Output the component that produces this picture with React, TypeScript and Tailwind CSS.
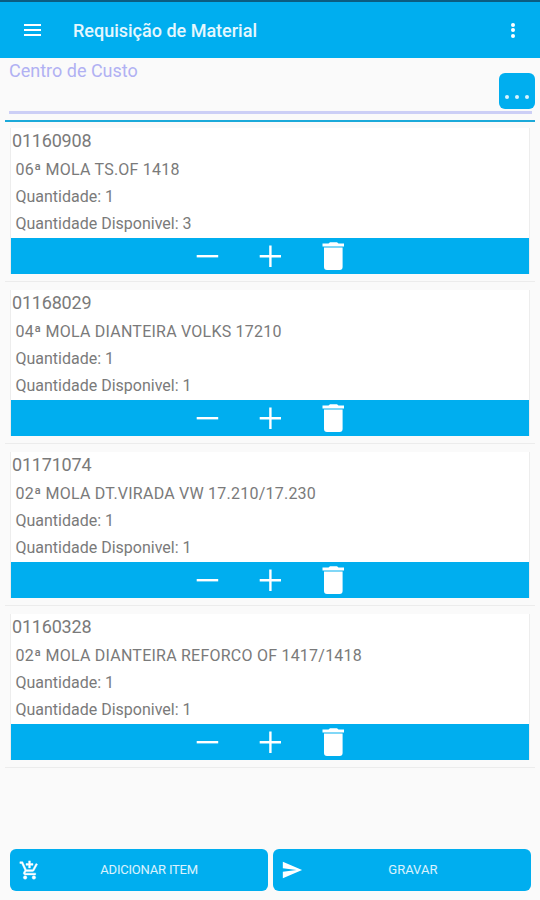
import { MdSend } from "react-icons/md"

type Item = {
    code: string
    description: string
    quantity: number
    available: number
}

const items: Item[] = [
    { code: "01160908", description: "06ª MOLA TS.OF 1418", quantity: 1, available: 3 },
    { code: "01168029", description: "04ª MOLA DIANTEIRA VOLKS 17210", quantity: 1, available: 1 },
    { code: "01171074", description: "02ª MOLA DT.VIRADA VW 17.210/17.230", quantity: 1, available: 1 },
    { code: "01160328", description: "02ª MOLA DIANTEIRA REFORCO OF 1417/1418", quantity: 1, available: 1 },
]

function Header() {
    return (
        <header className="h-[58px] shrink-0 bg-[#00aeef] border-t-2 border-[#0b5c80] flex items-center pl-[24px] pr-[25px]">
            <button aria-label="Menu" className="w-[17px] space-y-[3px]">
                <span className="block h-[2px] bg-white" />
                <span className="block h-[2px] bg-white" />
                <span className="block h-[2px] bg-white" />
            </button>
            <h1 className="ml-8 pt-[2px] flex-1 text-[18px] leading-6 font-medium text-white/90">Requisição de Material</h1>
            <button aria-label="Mais opções" className="space-y-[1.5px]">
                <span className="block size-1 rounded-full bg-white" />
                <span className="block size-1 rounded-full bg-white" />
                <span className="block size-1 rounded-full bg-white" />
            </button>
        </header>
    )
}

function CostCenter() {
    return (
        <div className="relative h-[56px] shrink-0 ml-[9px] mr-2 border-b-[3px] border-[#cccff6]">
            <label className="block text-[18px] leading-[26px] text-[#b1b1f3]">Centro de Custo</label>
            <button
                aria-label="Selecionar"
                className="absolute -right-[3px] top-[15px] size-9 rounded-md bg-[#00aeef] flex items-end justify-center gap-[6px] pb-[10px]">
                <span className="size-1 rounded-full bg-white/85" />
                <span className="size-1 rounded-full bg-white/85" />
                <span className="size-1 rounded-full bg-white/85" />
            </button>
        </div>
    )
}

function ItemCard({ item }: { item: Item }) {
    return (
        <li className="h-[162px] pt-[8px] pb-[7px] px-[5px] border-b border-[#ececec]">
            <div className="h-full flex flex-col bg-white border-x border-[#ededed] text-[#7a7a7a]">
                <p className="pl-px text-[18px] leading-[26px] tracking-[-0.2px]">{item.code}</p>
                <div className="flex-1 pl-[4.5px] pt-[2px] text-[16px] leading-[27px]">
                    <p className="tracking-[0.23px]">{item.description}</p>
                    <p>Quantidade: {item.quantity}</p>
                    <p>Quantidade Disponivel: {item.available}</p>
                </div>
                <div className="h-9 shrink-0 bg-[#00aeef] text-white flex justify-center gap-[39px]">
                    <svg className="w-6 h-9" viewBox="0 0 24 36" fill="currentColor">
                        <path d="M1.7 17h21.500v2.400H1.700z" />
                    </svg>
                    <svg className="w-6 h-9" viewBox="0 0 24 36" fill="currentColor">
                        <path d="M1.700 17h9.500V7.500h2.400V17H23v2.400h-9.400V29h-2.400v-9.600H1.700z" />
                    </svg>
                    <svg className="w-6 h-9" viewBox="0 0 24 36" fill="currentColor">
                        <path d="M1.500 5.500h6L9 4.300h7l1.500 1.200h5.500v3H1.500zM3 9.400h18.600V29q0 3-3 3H6q-3 0-3-3z" />
                    </svg>
                </div>
            </div>
        </li>
    )
}

function CartIcon() {
    return (
        <svg width="21" height="21" viewBox="0 0 24 24" fill="currentColor" stroke="currentColor" strokeWidth="0.5">
            <path d="M11 9h2V6h3V4h-3V1h-2v3H8v2h3v3z" />
            <circle cx="7" cy="20" r="2" />
            <circle cx="17" cy="20" r="2" />
            <path d="M7.170 14.750l.03-.12.9-1.630h7.450c.75 0 1.410-.41 1.750-1.030l3.860-7.010L19.420 4h-.01l-1.100 2-2.760 5H8.530l-.13-.27L6.160 6l-.95-2-.94-2H1v2h2l3.600 7.590-1.350 2.450c-.16.28-.25.61-.25.96 0 1.100.9 2 2 2h12v-2H7.420c-.13 0-.25-.11-.25-.25z" />
        </svg>
    )
}

export default function App() {
    return (
        <div className="w-[540px] h-[900px] flex flex-col bg-[#fafafa] font-['Roboto',sans-serif] overflow-hidden">
            <Header />
            <CostCenter />
            {/* the first card tucks under the rule */}
            <div className="h-[2px] shrink-0 mt-[6px] -mb-[2px] mx-[5px] bg-[#1ba9d9]" />
            <ul className="mx-[5px]">
                {items.map((item) => (
                    <ItemCard key={item.code} item={item} />
                ))}
            </ul>
            <footer className="mt-auto mb-[9px] pl-[9.5px] pr-[9px] grid grid-cols-2 gap-[5px]">
                <button className="h-[42px] rounded-md bg-[#00aeef] text-white flex items-center px-[9px]">
                    <CartIcon />
                    <span className="flex-1 text-[13px] tracking-[-0.2px] text-white/85">ADICIONAR ITEM</span>
                </button>
                <button className="h-[42px] rounded-md bg-[#00aeef] text-white flex items-center px-[8px]">
                    <MdSend size={22} />
                    <span className="flex-1 text-[13px] text-white/85">GRAVAR</span>
                </button>
            </footer>
        </div>
    )
}
